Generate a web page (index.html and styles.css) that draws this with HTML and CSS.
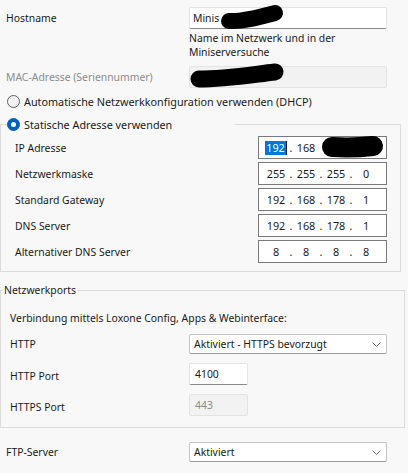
FILE: index.html
```html
<!DOCTYPE html>
<html lang="de">
<head>
<meta charset="utf-8">
<link rel="stylesheet" href="styles.css">
</head>
<body>
<div class="page">
  <div class="row">
    <span class="lbl">Hostname</span>
    <div class="field">
      <div class="input">Minis</div>
      <svg class="blot" width="100" height="30" viewBox="0 0 100 30"><path d="M40 14 C54 15 71 10 86 6" /></svg>
    </div>
  </div>
  <div class="hint">Name im Netzwerk und in der<br>Miniserversuche</div>
  <div class="row mac">
    <span class="lbl muted">MAC-Adresse (Seriennummer)</span>
    <div class="field">
      <div class="input disabled"></div>
      <svg class="blot blot-mac" width="100" height="30" viewBox="0 0 100 30"><path d="M10 13 C35 13 60 9 86 6" /></svg>
    </div>
  </div>
  <div class="radio-row"><span class="radio"></span><span>Automatische Netzwerkkonfiguration verwenden (DHCP)</span></div>

  <fieldset class="group ipgroup">
    <legend class="radio-legend"><span class="radio on"></span><span>Statische Adresse verwenden</span></legend>
    <div class="rows">
      <div class="iprow">
        <span>IP Adresse</span>
        <div class="ipbox">
          <span class="oct"><span class="sel">192</span><span class="caret"></span></span><span class="dot">.</span><span class="oct">168</span>
          <svg class="blot blot-ip" width="130" height="23" viewBox="0 0 130 23"><path d="M73 10 C90 11 105 10 114 9" /></svg>
        </div>
      </div>
      <div class="iprow">
        <span>Netzwerkmaske</span>
        <div class="ipbox"><span class="oct">255</span><span class="dot">.</span><span class="oct">255</span><span class="dot">.</span><span class="oct">255</span><span class="dot">.</span><span class="oct">0</span></div>
      </div>
      <div class="iprow">
        <span>Standard Gateway</span>
        <div class="ipbox"><span class="oct">192</span><span class="dot">.</span><span class="oct">168</span><span class="dot">.</span><span class="oct">178</span><span class="dot">.</span><span class="oct">1</span></div>
      </div>
      <div class="iprow">
        <span>DNS Server</span>
        <div class="ipbox"><span class="oct">192</span><span class="dot">.</span><span class="oct">168</span><span class="dot">.</span><span class="oct">178</span><span class="dot">.</span><span class="oct">1</span></div>
      </div>
      <div class="iprow">
        <span>Alternativer DNS Server</span>
        <div class="ipbox"><span class="oct">8</span><span class="dot">.</span><span class="oct">8</span><span class="dot">.</span><span class="oct">8</span><span class="dot">.</span><span class="oct">8</span></div>
      </div>
    </div>
  </fieldset>

  <fieldset class="group portgroup">
    <legend class="text-legend">Netzwerkports</legend>
    <div class="ports">
      <div class="conn">Verbindung mittels Loxone Config, Apps &amp; Webinterface:</div>
      <div class="prow">
        <span>HTTP</span>
        <div class="select"><span>Aktiviert - HTTPS bevorzugt</span><svg class="chev" width="9" height="5" viewBox="0 0 9 5"><path d="M0.5 0.5 L4.5 4.5 L8.5 0.5"/></svg></div>
      </div>
      <div class="prow">
        <span class="plbl">HTTP Port</span>
        <div class="input port">4100</div>
      </div>
      <div class="prow">
        <span class="plbl">HTTPS Port</span>
        <div class="input port disabled gray">443</div>
      </div>
    </div>
  </fieldset>

  <div class="row ftp">
    <span class="lbl">FTP-Server</span>
    <div class="select"><span>Aktiviert</span><svg class="chev" width="9" height="5" viewBox="0 0 9 5"><path d="M0.5 0.5 L4.5 4.5 L8.5 0.5"/></svg></div>
  </div>
</div>
</body>
</html>
```

FILE: styles.css
```css
* { box-sizing: border-box; }
html, body { margin: 0; padding: 0; }
body {
  background: #f8f8f8;
  font-family: "Noto Sans", "DejaVu Sans", sans-serif;
  font-size: 10.4px;
  color: #1a1a1a;
  width: 408px;
  height: 473px;
  overflow: hidden;
}
.page { padding-top: 7px; }

.row {
  display: grid;
  grid-template-columns: 189px 198px;
  align-items: center;
}
.lbl { padding-left: 6px; }
.muted { color: #8c8c8c; }

.field { position: relative; height: 22px; }
.input {
  height: 22px;
  background: #ffffff;
  border: 1px solid #e3e3e3;
  border-bottom-color: #8a8a8a;
  border-radius: 2px;
  padding: 0 3px;
  line-height: 20px;
}
.input.disabled { background: #f2f2f2; border-color: #e3e3e3; }
.input.gray { color: #8c8c8c; }

.blot {
  position: absolute;
  left: 0;
  top: 0;
  overflow: visible;
}
.blot path {
  fill: none;
  stroke: #000;
  stroke-width: 16;
  stroke-linecap: round;
}
.blot-mac path { stroke-width: 17; }
.blot-ip path { stroke-width: 20; }

.hint { margin: 2px 0 0 189px; line-height: 14px; }
.mac { margin-top: 7px; }

.radio-row {
  display: flex;
  align-items: center;
  gap: 4px;
  height: 16px;
  padding-left: 7px;
  margin-top: 5px;
  font-size: 10.8px;
}
.radio {
  width: 13px;
  height: 13px;
  flex: none;
  border-radius: 50%;
  border: 1px solid #5f5f5f;
  background: #f3f3f3;
  position: relative;
}
.radio.on { background: #005fb8; border-color: #005fb8; }
.radio.on::after {
  content: "";
  position: absolute;
  left: 3px;
  top: 3px;
  width: 5px;
  height: 5px;
  border-radius: 50%;
  background: #ffffff;
}

.group {
  margin: 0;
  border: 1px solid #dcdcdc;
  min-width: 0;
}
.ipgroup {
  width: 401px;
  margin-top: 7px;
  padding: 4px 0 8px 6px;
}
.radio-legend {
  display: flex;
  align-items: center;
  gap: 4px;
  width: 228px;
  height: 16px;
  padding: 0;
  margin: 0;
  font-size: 10.8px;
}
.rows { display: flex; flex-direction: column; gap: 3px; }
.iprow {
  display: grid;
  grid-template-columns: 243px 129px;
  align-items: center;
  margin-left: 8px;
}
.ipbox {
  position: relative;
  height: 23px;
  background: #ffffff;
  border: 1px solid #7a7a7a;
  display: flex;
  align-items: center;
  padding-left: 5px;
  font-size: 10.8px;
}
.oct { width: 24px; text-align: center; display: inline-flex; justify-content: center; align-items: center; }
.dot { width: 6px; text-align: center; }
.sel { background: #0078d7; color: #ffffff; padding: 0 1px; line-height: 14px; }
.caret { width: 1px; height: 14px; background: #1a1a1a; }

.portgroup {
  width: 405px;
  margin-top: 10px;
  padding: 12px 0 11px 2px;
}
.text-legend { padding: 0 1px; margin: 0; line-height: 16px; height: 16px; }
.ports { padding-left: 7px; }
.conn { line-height: 16px; }
.prow {
  display: grid;
  grid-template-columns: 179px 198px;
  align-items: center;
  margin-top: 8px;
}
.prow + .prow { margin-top: 9px; }
.plbl { padding-top: 3px; }
.port { width: 59px; padding-left: 5px; }

.select {
  height: 20px;
  background: #ffffff;
  border: 1px solid #c4c4c4;
  border-bottom-color: #9a9a9a;
  border-radius: 2px;
  display: flex;
  align-items: center;
  justify-content: space-between;
  padding: 0 5px 0 4px;
}
.chev path { fill: none; stroke: #6a6a6a; stroke-width: 1; }
.ftp { margin-top: 14px; }
```
